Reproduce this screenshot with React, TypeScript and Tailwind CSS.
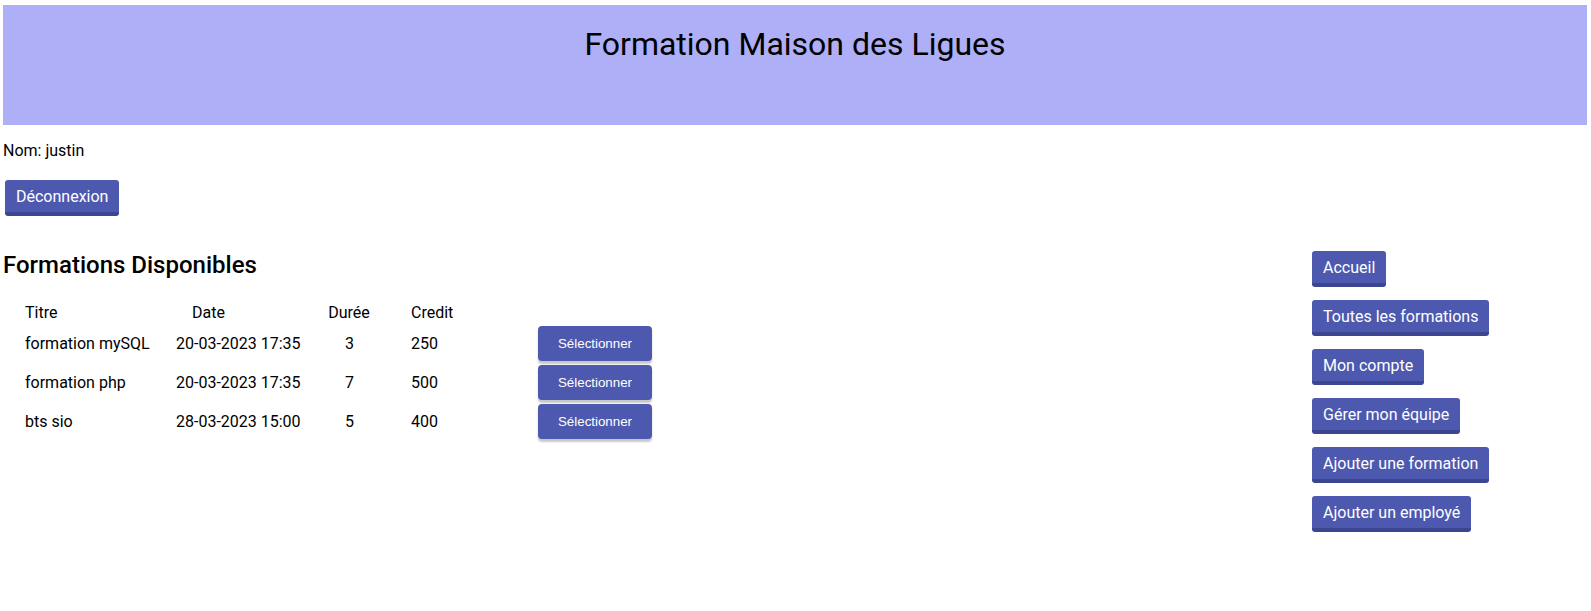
import React from "react";

const formations = [
    { titre: "formation mySQL", date: "20-03-2023 17:35", duree: 3, credit: 250 },
    { titre: "formation php", date: "20-03-2023 17:35", duree: 7, credit: 500 },
    { titre: "bts sio", date: "28-03-2023 15:00", duree: 5, credit: 400 },
];

const menu = [
    "Accueil",
    "Toutes les formations",
    "Mon compte",
    "Gérer mon équipe",
    "Ajouter une formation",
    "Ajouter un employé",
];

function NavButton({ label, className = "" }: { label: string; className?: string }) {
    return (
        <button
            className={
                "rounded-[3px] bg-[#4d59ae] border-b-4 border-[#3c4690] px-[11px] pt-[7px] pb-[6px] text-[16px] leading-[normal] text-white " +
                className
            }
        >
            {label}
        </button>
    );
}

export default function App() {
    return (
        <div className="min-h-[611px] bg-white font-['Roboto','Liberation_Sans',sans-serif] text-[16px] text-black">
            {/* Bandeau */}
            <header className="mt-[5px] ml-[3px] mr-[4px] h-[120px] bg-[#aeaff7] pt-[20px]">
                <h1 className="text-center text-[32px] leading-[normal] font-normal">
                    Formation Maison des Ligues
                </h1>
            </header>

            <div className="pl-[3px]">
                <p className="mt-[16px] leading-[normal]">Nom: justin</p>
                <NavButton label="Déconnexion" className="mt-[20px] ml-[2px]" />

                <div className="mt-[35px] flex">
                    {/* Liste des formations */}
                    <div className="flex-1">
                        <h2 className="text-[24px] leading-[normal] font-medium">Formations Disponibles</h2>

                        <div className="mt-[24px] grid grid-cols-[151px_142px_62px_158px_114px] gap-y-[4px] pl-[22px] items-center">
                            <div className="leading-[normal]">Titre</div>
                            <div className="pl-[16px] leading-[normal]">Date</div>
                            <div className="text-center leading-[normal]">Durée</div>
                            <div className="pl-[31px] leading-[normal]">Credit</div>
                            <div />

                            {formations.map((f) => (
                                <React.Fragment key={f.titre}>
                                    <div className="leading-[normal]">{f.titre}</div>
                                    <div className="leading-[normal]">{f.date}</div>
                                    <div className="text-center leading-[normal] pl-[1px]">{f.duree}</div>
                                    <div className="pl-[31px] leading-[normal]">{f.credit}</div>
                                    <button className="h-[35px] w-[114px] rounded-[4px] bg-[#4d59ae] font-['Liberation_Sans',Arial,sans-serif] text-[13.33px] text-white shadow-[0_3px_2px_rgba(0,0,0,0.22)]">
                                        Sélectionner
                                    </button>
                                </React.Fragment>
                            ))}
                        </div>
                    </div>

                    {/* Menu */}
                    <nav className="w-[279px] flex flex-col items-start gap-[13px]">
                        {menu.map((m) => (
                            <NavButton key={m} label={m} />
                        ))}
                    </nav>
                </div>
            </div>
        </div>
    );
}
